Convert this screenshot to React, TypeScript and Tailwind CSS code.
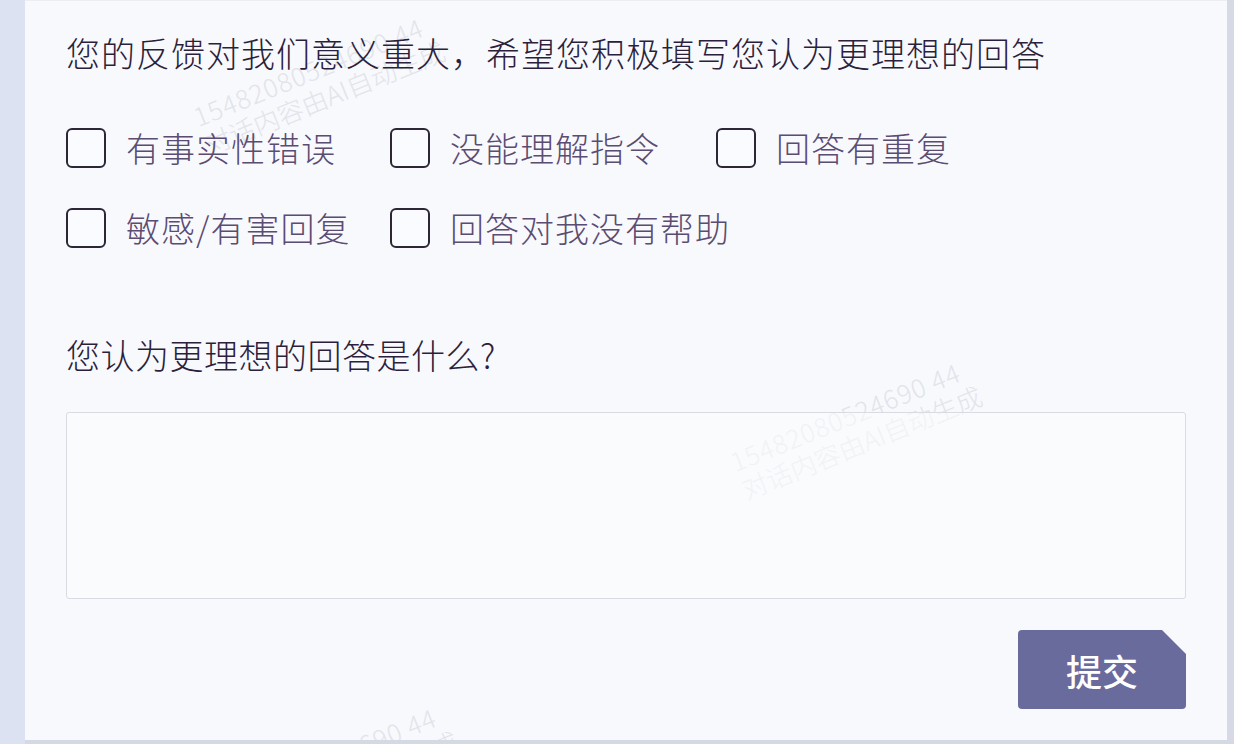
import { useState } from 'react'

const options = [
  ['有事实性错误', '没能理解指令', '回答有重复'],
  ['敏感/有害回复', '回答对我没有帮助'],
]

const font = 'font-["Noto_Sans_CJK_SC","Noto_Sans",sans-serif]'

function Watermark({ className }: { className: string }) {
  return (
    <div
      aria-hidden
      className={`pointer-events-none absolute flex flex-col whitespace-nowrap leading-[30px] text-[26px] font-light text-[#e2e4ea] -rotate-[22deg] origin-left select-none ${className}`}
    >
      <span className="tracking-[1px]">15482080524690 44</span>
      <span>对话内容由AI自动生成</span>
    </div>
  )
}

function Check({ label }: { label: string }) {
  const [on, setOn] = useState(false)
  return (
    <label className="flex items-center h-[40px] cursor-pointer whitespace-nowrap">
      <input type="checkbox" className="hidden" checked={on} onChange={() => setOn(!on)} />
      <span
        className={`w-[40px] h-[40px] shrink-0 rounded-[6px] border-2 border-[#2c2636] flex items-center justify-center ${on ? 'bg-[#6a6b9d]' : 'bg-[#fafbfe]'}`}
      >
        {on && (
          <svg width="24" height="24" viewBox="0 0 24 24" fill="none" stroke="white" strokeWidth="3">
            <path d="M4 12l5 5L20 6" />
          </svg>
        )}
      </span>
      <span className="ml-[20px] text-[34px] leading-[40px] font-light tracking-[1px] text-[#5b4c72]">{label}</span>
    </label>
  )
}

export default function App() {
  return (
    <div className={`w-[1234px] h-[744px] overflow-hidden bg-[#dce2f2] flex ${font}`}>
      <div className="w-[25px] shrink-0" />
      <div className="flex flex-col w-[1209px]">
        <div className="flex h-[740px]">
          <div className="relative w-[1202px] h-full bg-[#f8f9fd] border-t border-[#eceef4] pl-[41px] pr-[40px] pt-[32px] flex flex-col overflow-hidden">
            <Watermark className="left-[175px] top-[100px]" />
            <Watermark className="left-[712px] top-[445px]" />
            <Watermark className="left-[188px] top-[790px]" />

            <h2 className="relative text-[34px] leading-[40px] font-light text-[#2c1f3c] tracking-[1px] whitespace-nowrap">
              您的反馈对我们意义重大，希望您积极填写您认为更理想的回答
            </h2>

            <div className="relative mt-[55px] flex flex-col gap-[40px]">
              {options.map((row, i) => (
                <div key={i} className="grid grid-cols-[324px_326px_auto]">
                  {row.map((o) => (
                    <Check key={o} label={o} />
                  ))}
                </div>
              ))}
            </div>

            <h3 className="relative mt-[87px] text-[34px] leading-[40px] font-light text-[#2c1f3c] tracking-[0.5px]">
              您认为更理想的回答是什么?
            </h3>

            <textarea className="relative mt-[37px] w-[1120px] h-[187px] resize-none rounded-[3px] border border-[#d9dbe2] bg-[#fbfcfe]/60 outline-none p-3 text-[24px] text-[#2c1f3c]" />

            <div className="relative mt-[31px] flex justify-end pr-[1px]">
              <button className="w-[168px] h-[79px] rounded-[4px] bg-[#6a6b9d] text-white text-[36px] font-medium leading-none [clip-path:polygon(0_0,calc(100%-24px)_0,100%_24px,100%_100%,0_100%)]">
                提交
              </button>
            </div>
          </div>
          <div className="w-[7px] bg-[#d7dae4]" />
        </div>
        <div className="h-[4px] bg-[#d5d9e4]" />
      </div>
    </div>
  )
}
